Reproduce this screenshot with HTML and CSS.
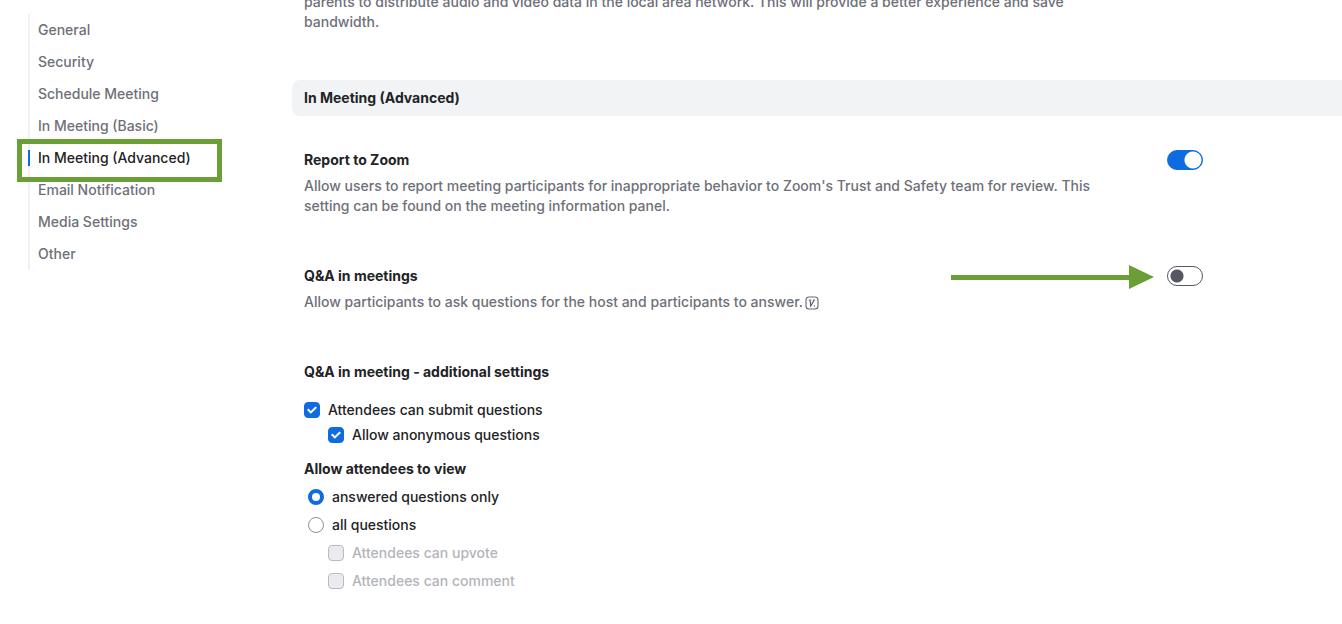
FILE: index.html
```html
<!DOCTYPE html>
<html lang="en">
<head>
<meta charset="utf-8">
<title>Meeting Settings</title>
<link rel="stylesheet" href="styles.css">
</head>
<body>
<div class="layout">
  <nav class="sidebar" aria-label="Settings sections">
    <a class="nav-link" href="#general">General</a>
    <a class="nav-link" href="#security">Security</a>
    <a class="nav-link" href="#schedule">Schedule Meeting</a>
    <a class="nav-link" href="#basic">In Meeting (Basic)</a>
    <a class="nav-link active" href="#advanced">In Meeting (Advanced)<span class="highlight"></span></a>
    <a class="nav-link" href="#email">Email Notification</a>
    <a class="nav-link" href="#media">Media Settings</a>
    <a class="nav-link" href="#other">Other</a>
  </nav>
  <main class="content">
    <p class="desc lead">parents to distribute audio and video data in the local area network. This will provide a better experience and save bandwidth.</p>
    <h2 class="section-title" id="advanced">In Meeting (Advanced)</h2>

    <section class="setting">
      <div class="setting-text">
        <h3 class="title" id="report">Report to Zoom</h3>
        <p class="desc">Allow users to report meeting participants for inappropriate behavior to Zoom's Trust and Safety team for review. This setting can be found on the meeting information panel.</p>
      </div>
      <input class="toggle" type="checkbox" role="switch" aria-labelledby="report" checked>
    </section>

    <section class="setting">
      <div class="setting-text">
        <h3 class="title" id="qa">Q&amp;A in meetings</h3>
        <p class="desc with-icon">Allow participants to ask questions for the host and participants to answer.
          <svg class="version-icon" viewBox="0 0 14 14" width="14" height="14" aria-hidden="true">
            <rect x="1" y="1" width="12" height="12" rx="3" fill="none" stroke="#666977" stroke-width="1.1"/>
            <path d="M3.600 4h2.800M8 4h2.200" fill="none" stroke="#666977" stroke-width=".8"/>
            <path d="M5 4l.8 6L9.200 4" fill="none" stroke="#565964" stroke-width="1.2"/>
            <circle cx="9.500" cy="10" r=".7" fill="#565964"/>
          </svg>
        </p>
      </div>
      <svg class="arrow" viewBox="0 0 203 24" width="203" height="24" aria-hidden="true">
        <path d="M0 10h178V0l25 12-25 12v-9H0z" fill="#6a9f36"/>
      </svg>
      <input class="toggle" type="checkbox" role="switch" aria-labelledby="qa">
    </section>

    <section class="options">
      <h3 class="title">Q&amp;A in meeting - additional settings</h3>
      <div class="checks">
        <label class="option"><input class="check" type="checkbox" checked>Attendees can submit questions</label>
        <label class="option nested"><input class="check" type="checkbox" checked>Allow anonymous questions</label>
      </div>
      <h3 class="title">Allow attendees to view</h3>
      <div class="radios">
        <label class="option radio-option"><input class="radio" type="radio" name="view" checked>answered questions only</label>
        <label class="option radio-option"><input class="radio" type="radio" name="view">all questions</label>
        <label class="option nested disabled"><input class="check" type="checkbox" disabled>Attendees can upvote</label>
        <label class="option nested disabled"><input class="check" type="checkbox" disabled>Attendees can comment</label>
      </div>
    </section>
  </main>
</div>
</body>
</html>
```
FILE: styles.css
```css
* {
  box-sizing: border-box;
}

body {
  margin: 0;
  background: #fff;
  color: #222325;
  font-family: Inter, "Liberation Sans", sans-serif;
  font-size: 14px;
  font-weight: 450;
  line-height: 20px;
  overflow-x: hidden;
}

h2, h3, p {
  margin: 0;
  font-size: 14px;
}

.layout {
  display: flex;
  align-items: flex-start;
}

.sidebar {
  flex: 0 0 236px;
  margin: 14px 28px 0;
  display: flex;
  flex-direction: column;
  box-shadow: inset 2px 0 #f1f1f3;
}

.nav-link {
  position: relative;
  padding: 6px 10px;
  color: #6e7079;
  text-decoration: none;
}

.active {
  color: #222325;
}

.active::before {
  content: "";
  position: absolute;
  left: 0;
  top: 8px;
  width: 2px;
  height: 16px;
  background: #0e6be0;
}

.highlight {
  position: absolute;
  left: -11px;
  top: -3px;
  width: 205px;
  height: 43px;
  border: 5px solid #6a9f36;
  z-index: 1;
}

.content {
  flex: 1;
  min-width: 0;
  margin-top: -8px;
}

.desc {
  color: #6e7079;
  max-width: 804px;
}

.lead {
  margin: 0 12px 48px;
}

.section-title {
  padding: 8px 12px;
  margin-bottom: 34px;
  background: #f2f3f5;
  border-radius: 8px 0 0 8px;
  font-weight: 700;
}

.title {
  font-weight: 700;
}

.setting {
  position: relative;
  display: flex;
  justify-content: space-between;
  margin: 0 139px 50px 12px;
}

.setting .desc {
  margin-top: 6px;
}

.with-icon {
  display: flex;
  align-items: center;
  gap: 2px;
}

.version-icon {
  margin-top: 2px;
}

.arrow {
  position: absolute;
  right: 49px;
  top: -1px;
}

input {
  appearance: none;
  margin: 0;
  flex: none;
}

.toggle {
  width: 36px;
  height: 20px;
  border: 1px solid #555863;
  border-radius: 10px;
  background: radial-gradient(circle at 9px 9px, #555863 6px, transparent 7px);
}

.toggle:checked {
  border-color: #0e6be0;
  background: radial-gradient(circle at 25px 9px, #fff 8px, #0e6be0 9px);
}

.options {
  margin-left: 12px;
}

.checks {
  display: flex;
  flex-direction: column;
  gap: 5px;
  margin: 18px 0 14px;
}

.radios {
  display: flex;
  flex-direction: column;
  gap: 8px;
  margin: 8px 0 32px;
}

.option {
  display: flex;
  align-items: center;
  gap: 8px;
}

.nested {
  margin-left: 24px;
}

.radio-option {
  margin-left: 4px;
}

.check {
  width: 16px;
  height: 16px;
  border: 1px solid #b9bac0;
  border-radius: 4px;
  display: grid;
  place-items: center;
}

.check:checked {
  border-color: #0e6be0;
  background: #0e6be0;
}

.check:checked::before {
  content: "";
  width: 10px;
  height: 8px;
  background: #fff;
  clip-path: polygon(0 50%, 15% 32%, 38% 62%, 85% 5%, 100% 22%, 38% 98%);
}

.check:disabled {
  background: #ebebef;
}

.radio {
  width: 16px;
  height: 16px;
  border: 1px solid #909096;
  border-radius: 50%;
}

.radio:checked {
  border: 4px solid #0e6be0;
}

.disabled {
  color: #b3b4ba;
}
```
